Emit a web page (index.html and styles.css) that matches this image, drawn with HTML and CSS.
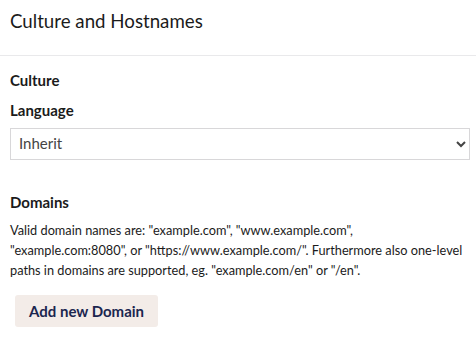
FILE: index.html
```html
<!DOCTYPE html>
<html>
<head>
<meta charset="utf-8">
<link rel="stylesheet" href="styles.css">
</head>
<body>
<div class="panel">
  <header class="panel-header">
    <h1 class="panel-title">Culture and Hostnames</h1>
  </header>
  <div class="panel-body">
    <h2 class="section-title">Culture</h2>
    <label class="field-label" for="lang">Language</label>
    <select id="lang" class="select">
      <option>Inherit</option>
    </select>

    <h2 class="section-title domains-title">Domains</h2>
    <p class="description">Valid domain names are: "example.com", "www.example.com", "example.com:8080", or "https://www.example.com/". Furthermore also one-level paths in domains are supported, eg. "example.com/en" or "/en".</p>
    <button class="btn" type="button">Add new Domain</button>
  </div>
</div>
</body>
</html>
```

FILE: styles.css
```css
html, body {
  margin: 0;
  padding: 0;
  background: #fff;
}
body {
  font-family: Lato, "Noto Sans", sans-serif;
  color: #1b1b1b;
}
.panel-header {
  height: 56px;
  box-sizing: border-box;
  border-bottom: 1px solid #e9e9eb;
  padding: 9px 10px 0;
}
.panel-title {
  margin: 0;
  font-size: 18.7px;
  font-weight: 400;
  line-height: 24px;
}
.panel-body {
  padding: 14px 10px 0;
}
.section-title {
  margin: 0;
  font-size: 15px;
  font-weight: 700;
  line-height: 20px;
}
.field-label {
  display: block;
  margin-top: 10px;
  font-size: 15px;
  font-weight: 700;
  line-height: 20px;
}
.select {
  display: block;
  width: 460px;
  height: 32px;
  margin-top: 8px;
  border: 1px solid #d8d7d9;
  border-radius: 0;
  background: #fff;
  font-family: Lato, sans-serif;
  font-size: 15px;
  color: #444;
  padding: 0 4px 3px;
}
.domains-title {
  margin-top: 32px;
}
.description {
  margin: 8px 0 0;
  font-size: 12.75px;
  line-height: 20px;
}
.btn {
  margin: 15px 0 0 5px;
  height: 32px;
  padding: 0 14px;
  border: none;
  border-radius: 3px;
  background: #f3ece8;
  color: #1b264f;
  font-family: Lato, sans-serif;
  font-size: 15px;
  font-weight: 700;
  cursor: pointer;
}
```
